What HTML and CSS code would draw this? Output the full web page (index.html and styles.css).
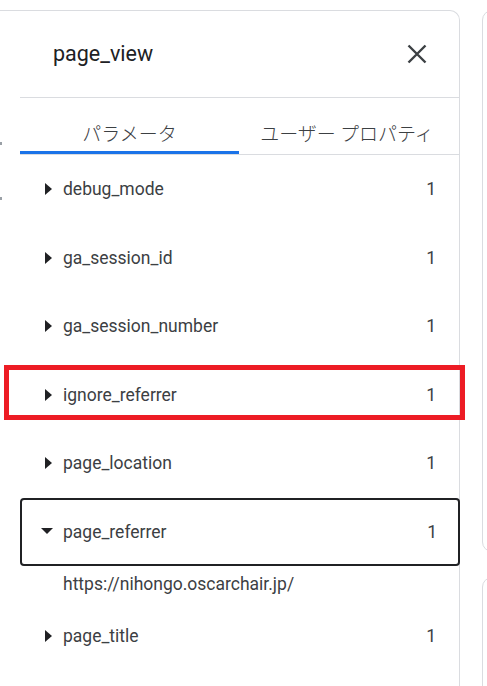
FILE: index.html
```html
<!DOCTYPE html>
<html lang="ja">
<head>
<meta charset="utf-8">
<title>page_view</title>
<link rel="stylesheet" href="styles.css">
</head>
<body>
<div class="panel">
  <div class="gutter"><span class="mark"></span><span class="mark"></span></div>
  <div class="content">
    <div class="header">
      <div class="title">page_view</div>
      <div class="close">
        <svg width="20" height="20" viewBox="0 0 20 20"><path d="M1.5 1.5 L18.5 18.5 M18.5 1.5 L1.5 18.5" stroke="#3c4043" stroke-width="2.4" fill="none"/></svg>
      </div>
    </div>
    <div class="tabs">
      <div class="tab active">パラメータ</div>
      <div class="tab">ユーザー プロパティ</div>
    </div>
    <div class="list">
      <div class="row"><span class="caret right"></span><span class="name">debug_mode</span><span class="val">1</span></div>
      <div class="row"><span class="caret right"></span><span class="name">ga_session_id</span><span class="val">1</span></div>
      <div class="row"><span class="caret right"></span><span class="name">ga_session_number</span><span class="val">1</span></div>
      <div class="row marked"><span class="caret right"></span><span class="name">ignore_referrer</span><span class="val">1</span><span class="highlight"></span></div>
      <div class="row"><span class="caret right"></span><span class="name">page_location</span><span class="val">1</span></div>
      <div class="row open"><span class="caret down"></span><span class="name">page_referrer</span><span class="val">1</span></div>
      <div class="detail">https://nihongo.oscarchair.jp/</div>
      <div class="row"><span class="caret right"></span><span class="name">page_title</span><span class="val">1</span></div>
    </div>
  </div>
</div>
<div class="side">
  <div class="card card-top"></div>
  <div class="card card-bottom"></div>
</div>
</body>
</html>
```

FILE: styles.css
```css
html, body {
  height: 686px;
  overflow: hidden;
}
body {
  margin: 0;
  background: #fff;
  font-family: Roboto, "Noto Sans CJK JP", sans-serif;
  color: #3c4043;
  display: flex;
  align-items: flex-start;
  padding-top: 10px;
  box-sizing: border-box;
}
.panel {
  margin-left: -21px;
  width: 481px;
  height: 700px;
  flex: none;
  border: 1px solid #dadce0;
  border-bottom: none;
  border-radius: 10px 10px 0 0;
  display: flex;
  box-sizing: border-box;
}
.gutter {
  width: 40px;
  flex: none;
  display: flex;
  flex-direction: column;
  padding: 131px 0 0 20px;
  gap: 52px;
  box-sizing: border-box;
}
.mark {
  width: 2px;
  height: 3px;
  background: #9aa0a6;
}
.content {
  flex: 1;
  min-width: 0;
}
.header {
  height: 86px;
  border-bottom: 1px solid #dadce0;
  display: flex;
  align-items: center;
  justify-content: space-between;
  padding: 0 32px 0 33px;
}
.title {
  font-size: 21.5px;
  color: #202124;
  padding-bottom: 1px;
}
.close {
  display: flex;
  width: 20px;
  height: 20px;
}
.tabs {
  height: 56px;
  border-bottom: 1px solid #dadce0;
  display: flex;
}
.tab {
  width: 50%;
  display: flex;
  align-items: flex-end;
  justify-content: center;
  padding-bottom: 10px;
  box-sizing: border-box;
  font-family: "Noto Sans CJK JP", sans-serif;
  font-size: 19px;
  font-weight: 300;
  line-height: 23px;
  color: #3c4043;
}
.tab.active {
  width: 219px;
  border-bottom: 3px solid #1a73e8;
  padding-bottom: 7px;
}
.tab + .tab {
  flex: 1;
  padding-right: 4px;
}
.list {
  display: flex;
  flex-direction: column;
}
.row {
  position: relative;
  height: 68.5px;
  display: flex;
  align-items: center;
  padding: 0 23px 0 15px;
  box-sizing: border-box;
  font-size: 17.5px;
}
.caret {
  width: 24px;
  height: 24px;
  display: flex;
  align-items: center;
  justify-content: center;
  flex: none;
}
.caret.right::before {
  content: "";
  border-left: 7px solid #202124;
  border-top: 6px solid transparent;
  border-bottom: 6px solid transparent;
  margin-left: 2px;
}
.caret.down::before {
  content: "";
  border-top: 6px solid #202124;
  border-left: 6px solid transparent;
  border-right: 6px solid transparent;
  margin-top: -2px;
}
.name {
  margin-left: 4px;
  flex: 1;
}
.val {
  flex: none;
}
.row.open {
  border: 2px solid #202124;
  border-radius: 4px;
  padding-left: 13px;
  padding-right: 21px;
  margin-right: -1px;
}
.detail {
  height: 36px;
  display: flex;
  align-items: center;
  padding-left: 43px;
  font-size: 17.5px;
}
.highlight {
  position: absolute;
  left: -16px;
  right: -6px;
  top: 4.5px;
  height: 55px;
  border: 5px solid #ed1c24;
  box-sizing: border-box;
}
.side {
  margin-left: 22px;
  flex: 1;
  display: flex;
  flex-direction: column;
  gap: 25px;
}
.card {
  width: 60px;
  border: 1px solid #dadce0;
  border-radius: 10px;
  box-sizing: border-box;
}
.card-top {
  height: 542px;
}
.card-bottom {
  height: 200px;
}
```
